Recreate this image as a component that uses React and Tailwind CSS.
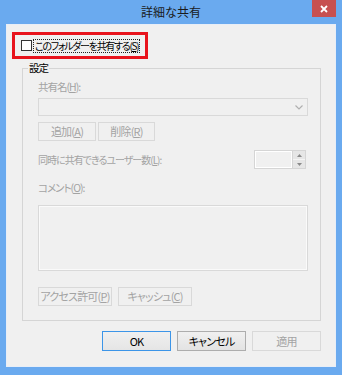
import React from "react";

const jp = "font-['Meiryo_UI','Noto_Sans_CJK_JP',sans-serif] [font-feature-settings:'palt']";

function Key({ children }) {
  return <span className="underline underline-offset-[1px]">{children}</span>;
}

function Btn({ children, className = "", disabled = false, primary = false }) {
  const tone = disabled
    ? "border-[#d9d9d9] bg-[#f0f0f0] text-[#a3a3a3]"
    : primary
    ? "border-[#3c95e8] bg-gradient-to-b from-[#f0f0f0] to-[#e5e5e5] text-black"
    : "border-[#adadad] bg-gradient-to-b from-[#f0f0f0] to-[#e3e3e3] text-black";
  return (
    <div className={`flex items-center justify-center whitespace-nowrap border text-[11px] leading-none tracking-[-0.8px] ${tone} ${className}`}>
      {children}
    </div>
  );
}

export default function App() {
  return (
    <div className={`flex h-[375px] w-[342px] flex-col bg-[#6aaaef] ${jp}`}>
      {/* title bar */}
      <div className="relative flex h-[24px] items-center justify-center">
        <span className="text-[12px] text-[#1a1a1a]">詳細な共有</span>
        <div className="absolute right-[6px] top-0 flex h-[17px] w-[24px] items-center justify-center bg-[#c75050]">
          <svg width="8" height="8" viewBox="0 0 8 8">
            <path d="M1 1L7 7M7 1L1 7" stroke="white" strokeWidth="1.8" />
          </svg>
        </div>
      </div>

      {/* body */}
      <div className="mx-[6px] mb-[8px] flex flex-1 flex-col border border-[#e8eef7] bg-[#f0f0f0] px-[5px] pt-[7px] pb-[13px] text-[10.5px] tracking-[-1px]">
        {/* highlighted checkbox */}
        <div className="flex h-[27px] w-[136px] items-center border-[3px] border-[#e8131c] pl-[6px]">
          <div className="h-[11px] w-[11px] shrink-0 border border-[#333] bg-white" />
          <div className="ml-[1px] whitespace-nowrap border border-dotted border-[#222] px-[1px] text-[10px] leading-[12px] tracking-[-1.3px] text-black">
            このフォルダーを共有する(<Key>S</Key>)
          </div>
        </div>

        {/* group */}
        <fieldset className="ml-[10px] mt-[2px] w-[299px] border border-[#d5d5d5] pl-[15px] pr-[12px] pb-[14px]">
          <legend className="-ml-[10px] px-[1px] leading-[14px] text-black">設定</legend>

          <div className="mt-[5px] whitespace-nowrap leading-[14px] text-[#a3a3a3]">
            共有名(<Key>H</Key>):
          </div>
          <div className="mt-[4px] flex h-[18px] items-center justify-end border border-[#d9d9d9] bg-[#f0f0f0] pr-[4px]">
            <svg width="8" height="5" viewBox="0 0 8 5">
              <path d="M0.5 0.5L4 4L7.5 0.5" stroke="#b0b0b0" strokeWidth="1.2" fill="none" />
            </svg>
          </div>

          <div className="mt-[6px] flex gap-[2px]">
            <Btn disabled className="h-[19px] w-[58px]">追加(<Key>A</Key>)</Btn>
            <Btn disabled className="h-[19px] w-[57px]">削除(<Key>R</Key>)</Btn>
          </div>

          <div className="mt-[9px] flex h-[19px] items-center justify-between pr-[2px]">
            <span className="whitespace-nowrap text-[10px] leading-[14px] text-[#a3a3a3]">
              同時に共有できるユーザー数(<Key>L</Key>):
            </span>
            <div className="flex h-[19px] w-[52px] border border-[#d5d5d5]">
              <div className="flex-1 border border-white bg-[#f0f0f0]" />
              <div className="flex w-[13px] flex-col border-l border-[#d5d5d5]">
                <div className="flex flex-1 items-center justify-center border-b border-[#f4f4f4] bg-[#e6e6e6]">
                  <svg width="5" height="3" viewBox="0 0 5 3"><path d="M2.5 0L5 3H0Z" fill="#8a8a8a" /></svg>
                </div>
                <div className="flex flex-1 items-center justify-center bg-[#e6e6e6]">
                  <svg width="5" height="3" viewBox="0 0 5 3"><path d="M0 0H5L2.5 3Z" fill="#8a8a8a" /></svg>
                </div>
              </div>
            </div>
          </div>

          <div className="mt-[12px] whitespace-nowrap leading-[14px] text-[#a3a3a3]">
            コメント(<Key>O</Key>):
          </div>
          <div className="mt-[10px] h-[66px] border border-[#d9d9d9] bg-[#f0f0f0] [box-shadow:inset_0_0_0_1px_#fafafa]" />

          <div className="mt-[16px] flex gap-[6px]">
            <Btn disabled className="h-[19px] w-[74px]">アクセス許可(<Key>P</Key>)</Btn>
            <Btn disabled className="h-[19px] w-[74px]">キャッシュ(<Key>C</Key>)</Btn>
          </div>
        </fieldset>

        {/* dialog buttons */}
        <div className="mt-[10px] flex justify-end gap-[6px] pr-[9px]">
          <Btn primary className="h-[20px] w-[69px]">OK</Btn>
          <Btn className="h-[20px] w-[69px]">キャンセル</Btn>
          <Btn disabled className="h-[20px] w-[69px]">適用</Btn>
        </div>
      </div>
    </div>
  );
}
